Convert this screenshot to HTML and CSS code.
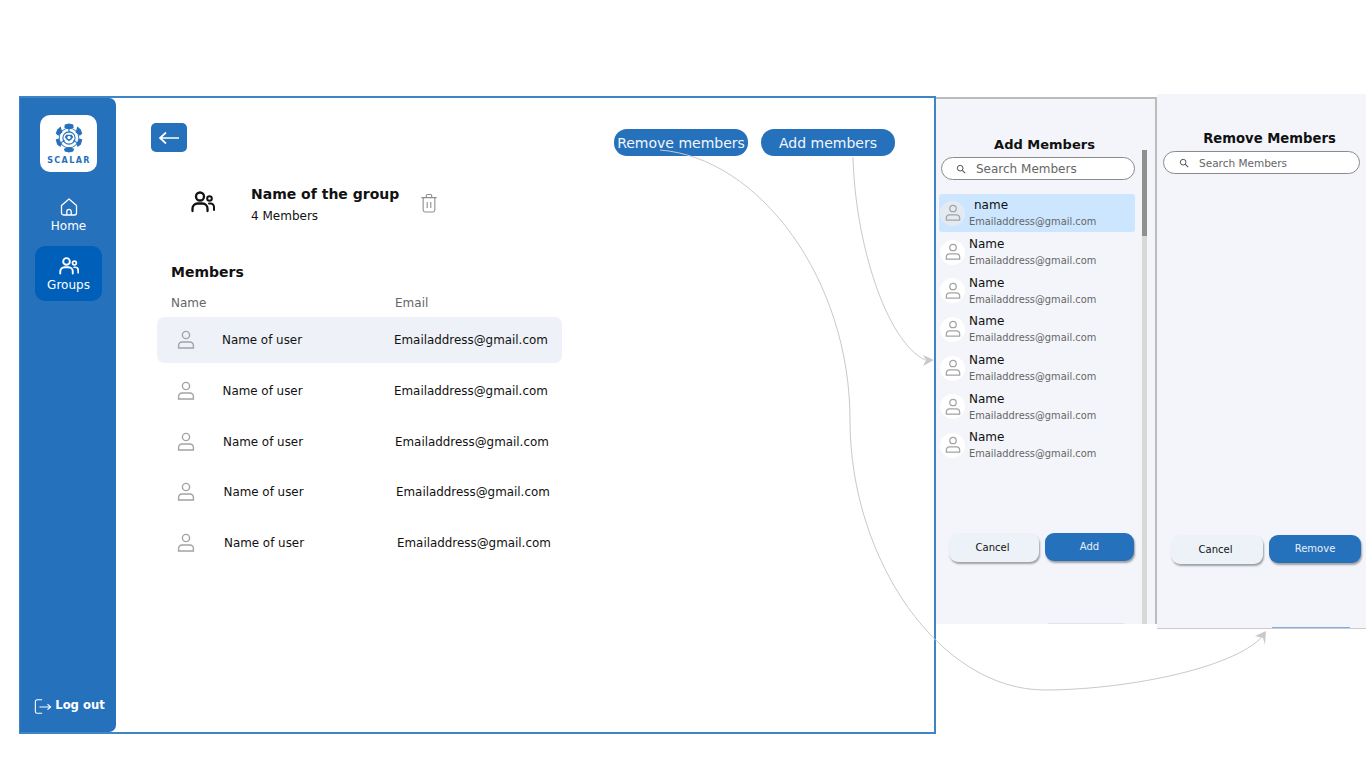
FILE: index.html
```html
<!DOCTYPE html>
<html lang="en">
<head>
    <meta charset="UTF-8">
    <meta name="viewport" content="width=device-width, initial-scale=1.0">
    <title>Group members</title>
    <link rel="stylesheet" href="styles.css">
</head>
<body>

<svg width="0" height="0" class="defs">
    <symbol id="i-user" viewBox="0 0 20 20">
        <circle cx="10" cy="5" r="3.6" fill="none" stroke="currentColor" stroke-width="1.4"/>
        <path d="M6 12h8a3.4 3.4 0 0 1 3.4 3.4v2.6H2.6v-2.6A3.4 3.4 0 0 1 6 12z" fill="none" stroke="currentColor" stroke-width="1.4"/>
    </symbol>
    <symbol id="i-group" viewBox="0 0 24 24">
        <circle cx="9" cy="6.5" r="4" fill="none" stroke="currentColor" stroke-width="2.3"/>
        <circle cx="18.5" cy="8.5" r="2.3" fill="none" stroke="currentColor" stroke-width="2"/>
        <path d="M1.5 21v-2.5A5 5 0 0 1 6.500 13.500h5a5 5 0 0 1 5 5V21" fill="none" stroke="currentColor" stroke-width="2.3" stroke-linecap="round"/>
        <path d="M18 13.500h1.500a3.500 3.500 0 0 1 3.500 3.500v3" fill="none" stroke="currentColor" stroke-width="2" stroke-linecap="round"/>
    </symbol>
    <symbol id="i-search" viewBox="0 0 12 12">
        <circle cx="5" cy="5" r="3.400" fill="none" stroke="currentColor" stroke-width="1.200"/>
        <path d="M7.600 7.600L11 11" stroke="currentColor" stroke-width="1.300"/>
    </symbol>
</svg>

<div class="canvas">

    <!-- main screen -->
    <div class="screen">
        <aside class="sidebar">
            <div class="logo">
                <svg class="logo-ball" viewBox="0 0 32 32">
                    <circle cx="16" cy="16" r="10.500" fill="none" stroke="#2671bc" stroke-width="1"/>
                    <circle cx="16" cy="16" r="6.500" fill="none" stroke="#2671bc" stroke-width="1.200"/>
                    <path d="M16 5.500v5M6.900 21.200l4.400-2.500M25.100 21.200l-4.400-2.500" stroke="#2671bc" stroke-width="1.200"/>
                    <path d="M11.500 1.500l4.500-1 4.500 1 .5 3.500-5 2-5-2z" fill="#2671bc"/>
                    <path d="M25 3.800l3.500 3 1.700 4.500-2.700 2.200-4.500-3.700z" fill="#2671bc"/>
                    <path d="M7 3.800L3.500 6.800 1.800 11.300l2.700 2.200 4.500-3.700z" fill="#2671bc"/>
                    <path d="M1.800 17.500l3-1 3.500 5.500-1.500 3.500-3.500-2.500z" fill="#2671bc"/>
                    <path d="M30.200 17.500l-3-1-3.500 5.500 1.500 3.500 3.500-2.500z" fill="#2671bc"/>
                    <path d="M10.500 27.500l5.500-2 5.500 2-1 3-4.500 1-4.500-1z" fill="#2671bc"/>
                    <path d="M13 12.500h6l1.500 2.500-2 2.500-2.500 2-2.500-2-2-2.500z" fill="#2671bc"/>
                    <circle cx="16" cy="15.500" r="1.800" fill="#fff"/>
                </svg>
                <span class="logo-text">SCALAR</span>
            </div>
            <nav class="nav">
                <a class="nav-item">
                    <svg class="nav-icon" viewBox="0 0 20 20">
                        <path d="M2.500 8.500L10 2l7.500 6.500V16a2 2 0 0 1-2 2h-11a2 2 0 0 1-2-2z" fill="none" stroke="currentColor" stroke-width="1.300" stroke-linejoin="round"/>
                        <path d="M7.800 18v-3.500a2.200 2.200 0 0 1 4.400 0V18" fill="none" stroke="currentColor" stroke-width="1.300"/>
                    </svg>
                    Home
                </a>
                <a class="nav-item active">
                    <svg class="nav-icon"><use href="#i-group"/></svg>
                    Groups
                </a>
            </nav>
            <a class="logout">
                <svg class="logout-icon" viewBox="0 0 20 18">
                    <path d="M9 1.500H3.500a2 2 0 0 0-2 2v11a2 2 0 0 0 2 2H9" fill="none" stroke="currentColor" stroke-width="1.200"/>
                    <path d="M6 9.500h12.500M15 6.500l3.500 3-3.500 3" fill="none" stroke="currentColor" stroke-width="1.200"/>
                </svg>
                Log out
            </a>
        </aside>

        <main class="content">
            <div class="top-row">
                <button class="back-btn">
                    <svg viewBox="0 0 22 14" width="22" height="14">
                        <path d="M21 7H2M8 1.500L2 7l6 5.500" fill="none" stroke="#fff" stroke-width="1.700"/>
                    </svg>
                </button>
                <div class="actions">
                    <button class="pill">Remove members</button>
                    <button class="pill">Add members</button>
                </div>
            </div>

            <div class="group-head">
                <svg class="group-icon"><use href="#i-group"/></svg>
                <div class="group-info">
                    <h2>Name of the group</h2>
                    <p>4 Members</p>
                </div>
                <svg class="trash" viewBox="0 0 20 22">
                    <path d="M1.500 5h17M7 5V2.800A1.300 1.300 0 0 1 8.300 1.500h3.400A1.300 1.300 0 0 1 13 2.800V5" fill="none" stroke="currentColor" stroke-width="1.200"/>
                    <path d="M3.500 5v13.500a2.500 2.500 0 0 0 2.500 2.500h8a2.500 2.500 0 0 0 2.500-2.500V5M8 10v6.500M12 10v6.500" fill="none" stroke="currentColor" stroke-width="1.200"/>
                </svg>
            </div>

            <h3 class="members-title">Members</h3>
            <div class="table-head">
                <span>Name</span>
                <span>Email</span>
            </div>
            <div class="table">
                <div class="row selected">
                    <svg class="row-icon"><use href="#i-user"/></svg>
                    <span class="row-name">Name of user</span>
                    <span class="row-email">Emailaddress@gmail.com</span>
                </div>
                <div class="row">
                    <svg class="row-icon"><use href="#i-user"/></svg>
                    <span class="row-name">Name of user</span>
                    <span class="row-email">Emailaddress@gmail.com</span>
                </div>
                <div class="row">
                    <svg class="row-icon"><use href="#i-user"/></svg>
                    <span class="row-name">Name of user</span>
                    <span class="row-email">Emailaddress@gmail.com</span>
                </div>
                <div class="row">
                    <svg class="row-icon"><use href="#i-user"/></svg>
                    <span class="row-name">Name of user</span>
                    <span class="row-email">Emailaddress@gmail.com</span>
                </div>
                <div class="row">
                    <svg class="row-icon"><use href="#i-user"/></svg>
                    <span class="row-name">Name of user</span>
                    <span class="row-email">Emailaddress@gmail.com</span>
                </div>
            </div>
        </main>
    </div>

    <!-- add members dialog -->
    <section class="panel panel-add">
        <h3>Add Members</h3>
        <div class="search">
            <svg class="search-icon"><use href="#i-search"/></svg>
            <span>Search Members</span>
        </div>
        <div class="list">
            <div class="person selected">
                <span class="avatar"><svg><use href="#i-user"/></svg></span>
                <div class="person-text"><b class="first">name</b><small>Emailaddress@gmail.com</small></div>
            </div>
            <div class="person">
                <span class="avatar"><svg><use href="#i-user"/></svg></span>
                <div class="person-text"><b>Name</b><small>Emailaddress@gmail.com</small></div>
            </div>
            <div class="person">
                <span class="avatar"><svg><use href="#i-user"/></svg></span>
                <div class="person-text"><b>Name</b><small>Emailaddress@gmail.com</small></div>
            </div>
            <div class="person">
                <span class="avatar"><svg><use href="#i-user"/></svg></span>
                <div class="person-text"><b>Name</b><small>Emailaddress@gmail.com</small></div>
            </div>
            <div class="person">
                <span class="avatar"><svg><use href="#i-user"/></svg></span>
                <div class="person-text"><b>Name</b><small>Emailaddress@gmail.com</small></div>
            </div>
            <div class="person">
                <span class="avatar"><svg><use href="#i-user"/></svg></span>
                <div class="person-text"><b>Name</b><small>Emailaddress@gmail.com</small></div>
            </div>
            <div class="person">
                <span class="avatar"><svg><use href="#i-user"/></svg></span>
                <div class="person-text"><b>Name</b><small>Emailaddress@gmail.com</small></div>
            </div>
        </div>
        <div class="scrollbar"><div class="scroll-thumb"></div></div>
        <div class="panel-buttons">
            <button class="btn btn-cancel">Cancel</button>
            <button class="btn btn-primary">Add</button>
        </div>
        <div class="peek"></div>
    </section>

    <!-- remove members dialog -->
    <section class="panel panel-remove">
        <h3>Remove Members</h3>
        <div class="search">
            <svg class="search-icon"><use href="#i-search"/></svg>
            <span>Search Members</span>
        </div>
        <div class="panel-buttons">
            <button class="btn btn-cancel">Cancel</button>
            <button class="btn btn-primary">Remove</button>
        </div>
        <div class="peek"></div>
    </section>

    <!-- prototype connectors -->
    <svg class="links" width="1366" height="768" viewBox="0 0 1366 768">
        <path d="M660 150C760 158 850 280 850 420C850 560 940 690 1045 690C1120 690 1232 670 1263 636" fill="none" stroke="#c9c9c9" stroke-width="1"/>
        <path d="M1266 631l-11 5 8 2 2 7z" fill="#c9c9c9"/>
        <path d="M853 157C855 240 885 340 925 360" fill="none" stroke="#c9c9c9" stroke-width="1"/>
        <path d="M934 360l-11-5 3 5-3 6z" fill="#c9c9c9"/>
    </svg>
</div>

</body>
</html>
```
FILE: styles.css
```css
* {
    box-sizing: border-box;
}
body {
    margin: 0;
    background-color: #fff;
    font-family: "DejaVu Sans", Verdana, sans-serif;
    color: #111;
}
button {
    font-family: inherit;
    border: none;
    padding: 0;
}
h2, h3, p {
    margin: 0;
}
.defs {
    position: absolute;
}
.canvas {
    position: relative;
    width: 1366px;
    height: 768px;
    overflow: hidden;
}

/* main screen */
.screen {
    position: absolute;
    left: 19px;
    top: 96px;
    width: 917px;
    height: 638px;
    display: flex;
    border: 2px solid #3d85c6;
    border-left-width: 1px;
    background-color: #fff;
}
.sidebar {
    width: 96px;
    flex-shrink: 0;
    display: flex;
    flex-direction: column;
    align-items: center;
    padding-top: 17px;
    background-color: #2671bc;
    border-radius: 0 7px 7px 0;
    color: #fff;
}
.logo {
    width: 57px;
    height: 57px;
    border-radius: 10px;
    background-color: #fff;
    display: flex;
    flex-direction: column;
    align-items: center;
    padding-top: 8px;
    margin-left: 1px;
}
.logo-ball {
    width: 30px;
    height: 30px;
}
.logo-text {
    font-size: 8px;
    font-weight: bold;
    letter-spacing: 1.4px;
    color: #2671bc;
    margin: 3px 0 0 1px;
}
.nav {
    display: flex;
    flex-direction: column;
    align-items: center;
    gap: 4px;
    margin-top: 15px;
}
.nav-item {
    width: 67px;
    height: 55px;
    display: flex;
    flex-direction: column;
    align-items: center;
    justify-content: center;
    gap: 2px;
    font-size: 12px;
    border-radius: 10px;
    margin-left: 1px;
}
.nav-item.active {
    background-color: #005fb8;
}
.nav-icon {
    width: 20px;
    height: 20px;
}
.logout {
    margin-top: auto;
    margin-bottom: 17px;
    display: flex;
    align-items: center;
    gap: 3px;
    font-size: 11.600px;
    font-weight: bold;
    margin-left: 3px;
}
.logout-icon {
    width: 18px;
    height: 17px;
    margin-top: 3px;
}

.content {
    flex: 1;
    padding: 25px 39px 0 35px;
}
.top-row {
    display: flex;
    justify-content: space-between;
    align-items: flex-start;
}
.back-btn {
    width: 36px;
    height: 29px;
    border-radius: 5px;
    background-color: #2671bc;
    display: flex;
    align-items: center;
    justify-content: center;
}
.actions {
    display: flex;
    gap: 13px;
    margin-top: 6px;
}
.pill {
    width: 134px;
    height: 27px;
    border-radius: 13px;
    background-color: #2671bc;
    color: #f2f6fb;
    font-size: 14px;
}
.group-head {
    display: flex;
    align-items: center;
    margin: 23px 0 0 40px;
}
.group-icon {
    width: 24px;
    height: 24px;
    color: #111;
}
.group-info {
    margin-left: 36px;
    padding-top: 5px;
}
.group-info h2 {
    font-size: 14px;
    line-height: 20px;
}
.group-info p {
    font-size: 12px;
    line-height: 16px;
    margin-top: 4px;
}
.trash {
    width: 18px;
    height: 20px;
    margin-left: 21px;
    margin-top: 2px;
    color: #8d8d8d;
}
.members-title {
    font-size: 14px;
    line-height: 20px;
    margin: 38px 0 0 20px;
}
.table-head {
    display: flex;
    font-size: 12px;
    line-height: 16px;
    color: #666;
    margin: 13px 0 0 20px;
}
.table-head span:first-child {
    width: 224px;
}
.table {
    display: flex;
    flex-direction: column;
    gap: 4.800px;
    width: 405px;
    margin: 6px 0 0 6px;
}
.row {
    height: 46px;
    display: flex;
    align-items: center;
    border-radius: 7px;
    font-size: 11.900px;
    padding-left: 19px;
}
.row.selected {
    background-color: #eef2f8;
}
.row-icon {
    width: 20px;
    height: 20px;
    color: #a3a3a3;
    flex-shrink: 0;
}
.row-name {
    width: 172px;
    margin-left: 26px;
}
.row:nth-child(2) .row-name { margin-left: 26.500px; width: 171.500px; }
.row:nth-child(3) .row-name { margin-left: 27px; width: 172px; }
.row:nth-child(4) .row-name { margin-left: 27.500px; width: 172.500px; }
.row:nth-child(5) .row-name { margin-left: 28px; width: 173px; }

/* dialogs */
.panel {
    position: absolute;
    background-color: #f3f5fa;
    text-align: center;
}
.panel-add {
    left: 936px;
    top: 97px;
    width: 221px;
    height: 527px;
    border-top: 2px solid #bcbcbc;
    border-right: 2px solid #bcbcbc;
    padding: 37px 0 0 5px;
}
.panel-remove {
    left: 1157px;
    top: 94px;
    width: 209px;
    height: 535px;
    border-bottom: 1px solid #c9ccd2;
    padding: 36px 6px 0 6px;
}
.panel h3 {
    font-size: 13px;
    line-height: 18px;
    padding-right: 7px;
}
.panel-remove h3 {
    font-size: 13.200px;
    padding: 0 0 0 16px;
}
.search {
    display: flex;
    align-items: center;
    height: 23px;
    background-color: #fff;
    border: 1px solid #8a8a8a;
    border-radius: 12px;
    font-size: 12px;
    color: #666;
    padding-left: 14px;
    margin-top: 3px;
    width: 194px;
}
.search-icon {
    width: 10px;
    height: 10px;
    margin-right: 10px;
    color: #555;
}
.panel-remove .search {
    width: 197px;
    margin-top: 3px;
    font-size: 10.500px;
    padding-left: 15px;
}
.list {
    margin: 14px 0 0 -2px;
    width: 196px;
    text-align: left;
}
.person {
    height: 38.700px;
    display: flex;
    align-items: center;
    border-radius: 3px;
    padding-left: 1px;
}
.person.selected {
    background-color: #cce6ff;
    height: 38px;
    margin-bottom: .700px;
}
.avatar {
    width: 25px;
    height: 25px;
    border-radius: 50%;
    background-color: #fff;
    display: flex;
    align-items: center;
    justify-content: center;
    flex-shrink: 0;
    color: #a3a3a3;
}
.selected .avatar {
    background-color: #e4eaf2;
}
.avatar svg {
    width: 18px;
    height: 18px;
}
.person-text {
    margin-left: 4px;
}
.person-text b {
    display: block;
    font-weight: normal;
    font-size: 12px;
    line-height: 16px;
}
.person-text b.first {
    padding-left: 5px;
}
.person-text small {
    display: block;
    font-size: 9.850px;
    line-height: 15px;
    margin-top: 1px;
    color: #666;
}
.scrollbar {
    position: absolute;
    left: 206px;
    top: 51px;
    width: 5px;
    bottom: 0;
    background-color: #d8d8d8;
}
.scroll-thumb {
    height: 86px;
    background-color: #8f8f8f;
}
.panel-buttons {
    position: absolute;
    display: flex;
    gap: 6px;
}
.panel-add .panel-buttons {
    left: 13px;
    top: 434px;
}
.panel-remove .panel-buttons {
    left: 14px;
    top: 441px;
}
.btn {
    width: 90px;
    height: 29px;
    border-radius: 9px;
    font-size: 10px;
    box-shadow: 1px 2px 2px rgba(0, 0, 0, 0.35);
}
.btn-cancel {
    background-color: #edf2f9;
    color: #111;
    padding-right: 3px;
}
.btn-primary {
    background-color: #2671bc;
    color: #e6f0fa;
    height: 28px;
    padding-bottom: 2px;
}
.panel-add .btn-primary {
    width: 89px;
}
.panel-remove .btn {
    width: 92px;
}
/* edge of the next button showing under the frame */
.peek {
    position: absolute;
    bottom: 0;
    height: 1px;
}
.panel-add .peek {
    left: 112px;
    width: 76px;
    background-color: #dde5ee;
}
.panel-remove .peek {
    left: 115px;
    width: 78px;
    background-color: #7fb0e0;
}

/* connectors sit above everything */
.links {
    position: absolute;
    left: 0;
    top: 0;
    pointer-events: none;
}
```
